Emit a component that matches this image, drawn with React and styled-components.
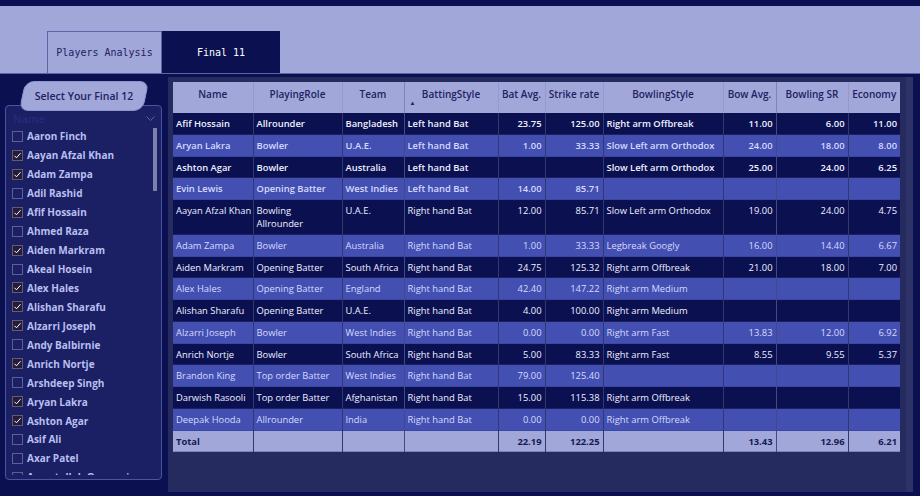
import React from "react";
import styled, { createGlobalStyle } from "styled-components";

const NAVY = "#0b1150";
const LAV = "#a2a7d9";

const GlobalStyle = createGlobalStyle`
  html, body { margin: 0; padding: 0; background: ${NAVY}; }
  * { box-sizing: border-box; }
`;

const Page = styled.div`
  width: 920px;
  height: 496px;
  display: flex;
  flex-direction: column;
  background: ${NAVY};
  font-family: "Segoe UI", "Open Sans", "Noto Sans", sans-serif;
  overflow: hidden;
`;

const TopStrip = styled.div`
  height: 6px;
  background: ${NAVY};
`;

const TabBand = styled.div`
  height: 68px;
  background: ${LAV};
  display: flex;
  align-items: flex-end;
  padding-left: 47px;
  border-bottom: 1px solid #5c64a4;
`;

const Tab = styled.div`
  width: ${(p) => p.$w}px;
  height: 42px;
  display: flex;
  align-items: center;
  justify-content: center;
  font-family: "DejaVu Sans Mono", "Liberation Mono", monospace;
  font-size: 10px;
  color: ${(p) => (p.$active ? "#ffffff" : "#1d2262")};
  background: ${(p) => (p.$active ? NAVY : "transparent")};
  border: 1px solid ${(p) => (p.$active ? NAVY : "#5c64a4")};
  border-bottom: none;
`;

const Main = styled.div`
  flex: 1;
  display: flex;
  padding: 3px 0 4px 5px;
`;

const Sidebar = styled.div`
  position: relative;
  width: 157px;
  padding-top: 28px;
`;

const SlicerTitle = styled.div`
  position: absolute;
  top: 4px;
  left: 17px;
  width: 124px;
  height: 30px;
  display: flex;
  align-items: center;
  justify-content: center;
  z-index: 2;
  &::before {
    content: "";
    position: absolute;
    inset: 0;
    background: ${LAV};
    border-radius: 9px;
    transform: skewX(-12deg);
    border: 1px solid #8d93cc;
  }
  span {
    position: relative;
    font-size: 10.5px;
    font-weight: 600;
    color: #1d2262;
  }
`;

const SlicerBox = styled.div`
  position: relative;
  height: 375px;
  background: #1b2064;
  border: 1px solid #4c54a0;
  border-radius: 4px;
  display: flex;
  flex-direction: column;
  overflow: hidden;
`;

const SlicerHead = styled.div`
  height: 21px;
  display: flex;
  align-items: center;
  justify-content: space-between;
  padding: 4px 6px 0 7px;
  font-size: 11px;
  font-weight: 600;
  color: #242b7e;
  flex-shrink: 0;
`;

const ScrollThumb = styled.div`
  position: absolute;
  right: 4px;
  top: 22px;
  width: 4px;
  height: 63px;
  background: #7c80aa;
`;

const List = styled.div`
  flex: 1;
  overflow: hidden;
  margin-bottom: 4px;
`;

const Item = styled.div`
  height: 18.94px;
  display: flex;
  align-items: center;
  gap: 4px;
  padding-left: 6px;
  font-size: 10px;
  font-weight: 700;
  color: #b9bff0;
  white-space: nowrap;
`;

const Box = styled.div`
  width: 11px;
  height: 11px;
  flex-shrink: 0;
  border: 1px solid ${(p) => (p.$checked ? "#6c5966" : "#5a5f94")};
  background: ${(p) => (p.$checked ? "#221d3c" : "transparent")};
  display: flex;
  align-items: center;
  justify-content: center;
`;

const Visual = styled.div`
  margin-left: 6px;
  width: 745px;
  background: #262b5f;
  padding: 5px 12px 0 5px;
  position: relative;
`;

const RightTrack = styled.div`
  position: absolute;
  right: 0;
  top: 0;
  bottom: 0;
  width: 7px;
  background: #2d3268;
`;

const Table = styled.table`
  width: 727px;
  border-collapse: collapse;
  table-layout: fixed;
  font-size: 9.4px;
`;

const HeadCell = styled.th`
  position: relative;
  height: 31px;
  background: ${LAV};
  color: #1d2262;
  font-weight: 600;
  font-size: 10px;
  text-align: center;
  vertical-align: top;
  padding: 5px 2px 0;
  white-space: nowrap;
  border-right: 1px solid ${(p) => (p.$strong ? "#7d83bf" : "#9499cf")};
  &:last-child { border-right: none; }
`;

const SortArrow = styled.span`
  position: absolute;
  left: 5px;
  bottom: 7px;
  font-size: 6px;
  line-height: 1;
  color: #1d2262;
`;

const Row = styled.tr`
  background: ${(p) => (p.$light ? "#4350b2" : NAVY)};
  color: ${(p) => (p.$light ? "#d6daff" : "#eef0ff")};
  font-weight: ${(p) => (p.$bold ? 600 : 400)};
  border-bottom: 0.7px solid ${(p) => (p.$light ? "#3a47a4" : "#1a2060")};
`;

const Cell = styled.td`
  padding: 4px 3px 3.75px;
  line-height: 13px;
  vertical-align: top;
  text-align: ${(p) => (p.$num ? "right" : "left")};
  white-space: ${(p) => (p.$wrap ? "normal" : "nowrap")};
  overflow: hidden;
  border-right: 1px solid ${(p) => (p.$strong ? "rgba(140,150,230,0.28)" : "rgba(140,150,230,0.12)")};
  &:last-child { border-right: none; }
`;

const TotalRow = styled.tr`
  background: ${LAV};
  color: #141a55;
  font-weight: 700;
  border-bottom: 1px solid #7d83bf;
`;

const cols = [
  { h: "Name", w: 80 },
  { h: "PlayingRole", w: 89 },
  { h: "Team", w: 62, strong: true },
  { h: "BattingStyle", w: 94, sort: true },
  { h: "Bat Avg.", w: 47, num: true },
  { h: "Strike rate", w: 58, num: true },
  { h: "BowlingStyle", w: 120 },
  { h: "Bow Avg.", w: 53, num: true, strong: true },
  { h: "Bowling SR", w: 72, num: true },
  { h: "Economy", w: 52, num: true, strong: true },
];

const rows = [
  ["Afif Hossain", "Allrounder", "Bangladesh", "Left hand Bat", "23.75", "125.00", "Right arm Offbreak", "11.00", "6.00", "11.00"],
  ["Aryan Lakra", "Bowler", "U.A.E.", "Left hand Bat", "1.00", "33.33", "Slow Left arm Orthodox", "24.00", "18.00", "8.00"],
  ["Ashton Agar", "Bowler", "Australia", "Left hand Bat", "", "", "Slow Left arm Orthodox", "25.00", "24.00", "6.25"],
  ["Evin Lewis", "Opening Batter", "West Indies", "Left hand Bat", "14.00", "85.71", "", "", "", ""],
  ["Aayan Afzal Khan", "Bowling Allrounder", "U.A.E.", "Right hand Bat", "12.00", "85.71", "Slow Left arm Orthodox", "19.00", "24.00", "4.75"],
  ["Adam Zampa", "Bowler", "Australia", "Right hand Bat", "1.00", "33.33", "Legbreak Googly", "16.00", "14.40", "6.67"],
  ["Aiden Markram", "Opening Batter", "South Africa", "Right hand Bat", "24.75", "125.32", "Right arm Offbreak", "21.00", "18.00", "7.00"],
  ["Alex Hales", "Opening Batter", "England", "Right hand Bat", "42.40", "147.22", "Right arm Medium", "", "", ""],
  ["Alishan Sharafu", "Opening Batter", "U.A.E.", "Right hand Bat", "4.00", "100.00", "Right arm Medium", "", "", ""],
  ["Alzarri Joseph", "Bowler", "West Indies", "Right hand Bat", "0.00", "0.00", "Right arm Fast", "13.83", "12.00", "6.92"],
  ["Anrich Nortje", "Bowler", "South Africa", "Right hand Bat", "5.00", "83.33", "Right arm Fast", "8.55", "9.55", "5.37"],
  ["Brandon King", "Top order Batter", "West Indies", "Right hand Bat", "79.00", "125.40", "", "", "", ""],
  ["Darwish Rasooli", "Top order Batter", "Afghanistan", "Right hand Bat", "15.00", "115.38", "Right arm Offbreak", "", "", ""],
  ["Deepak Hooda", "Allrounder", "India", "Right hand Bat", "0.00", "0.00", "Right arm Offbreak", "", "", ""],
];

const totals = ["Total", "", "", "", "22.19", "122.25", "", "13.43", "12.96", "6.21"];

const players = [
  ["Aaron Finch", false],
  ["Aayan Afzal Khan", true],
  ["Adam Zampa", true],
  ["Adil Rashid", false],
  ["Afif Hossain", true],
  ["Ahmed Raza", false],
  ["Aiden Markram", true],
  ["Akeal Hosein", false],
  ["Alex Hales", true],
  ["Alishan Sharafu", true],
  ["Alzarri Joseph", true],
  ["Andy Balbirnie", false],
  ["Anrich Nortje", true],
  ["Arshdeep Singh", false],
  ["Aryan Lakra", true],
  ["Ashton Agar", true],
  ["Asif Ali", false],
  ["Axar Patel", false],
  ["Azmatullah Omarzai", false],
];

const Check = () => (
  <svg width="9" height="9" viewBox="0 0 9 9">
    <polyline points="1.5,4.8 3.5,6.8 7.5,2.2" fill="none" stroke="#ffffff" strokeWidth="1" />
  </svg>
);

const Chevron = () => (
  <svg width="9" height="6" viewBox="0 0 9 6">
    <polyline points="0.5,0.5 4.5,4.5 8.5,0.5" fill="none" stroke="#5a62a0" strokeWidth="1" />
  </svg>
);

export default function App() {
  return (
    <Page>
      <GlobalStyle />
      <TopStrip />
      <TabBand>
        <Tab $w={115}>Players Analysis</Tab>
        <Tab $w={118} $active>Final 11</Tab>
      </TabBand>
      <Main>
        <Sidebar>
          <SlicerTitle><span>Select Your Final 12</span></SlicerTitle>
          <SlicerBox>
            <SlicerHead>
              <span>Name</span>
              <Chevron />
            </SlicerHead>
            <ScrollThumb />
            <List>
              {players.map(([n, c]) => (
                <Item key={n}>
                  <Box $checked={c}>{c && <Check />}</Box>
                  <span>{n}</span>
                </Item>
              ))}
            </List>
          </SlicerBox>
        </Sidebar>
        <Visual>
          <RightTrack />
          <Table>
            <colgroup>
              {cols.map((c) => (
                <col key={c.h} style={{ width: c.w }} />
              ))}
            </colgroup>
            <thead>
              <tr>
                {cols.map((c) => (
                  <HeadCell key={c.h} $strong={c.strong}>
                    {c.h}
                    {c.sort && <SortArrow>▲</SortArrow>}
                  </HeadCell>
                ))}
              </tr>
            </thead>
            <tbody>
              {rows.map((r, i) => (
                <Row key={r[0]} $light={i % 2 === 1} $bold={i < 4}>
                  {r.map((v, j) => (
                    <Cell key={j} $num={cols[j].num} $strong={cols[j].strong} $wrap={j === 1}>
                      {v}
                    </Cell>
                  ))}
                </Row>
              ))}
              <TotalRow>
                {totals.map((v, j) => (
                  <Cell key={j} $num={cols[j].num} $strong={cols[j].strong}>
                    {v}
                  </Cell>
                ))}
              </TotalRow>
            </tbody>
          </Table>
        </Visual>
      </Main>
    </Page>
  );
}
